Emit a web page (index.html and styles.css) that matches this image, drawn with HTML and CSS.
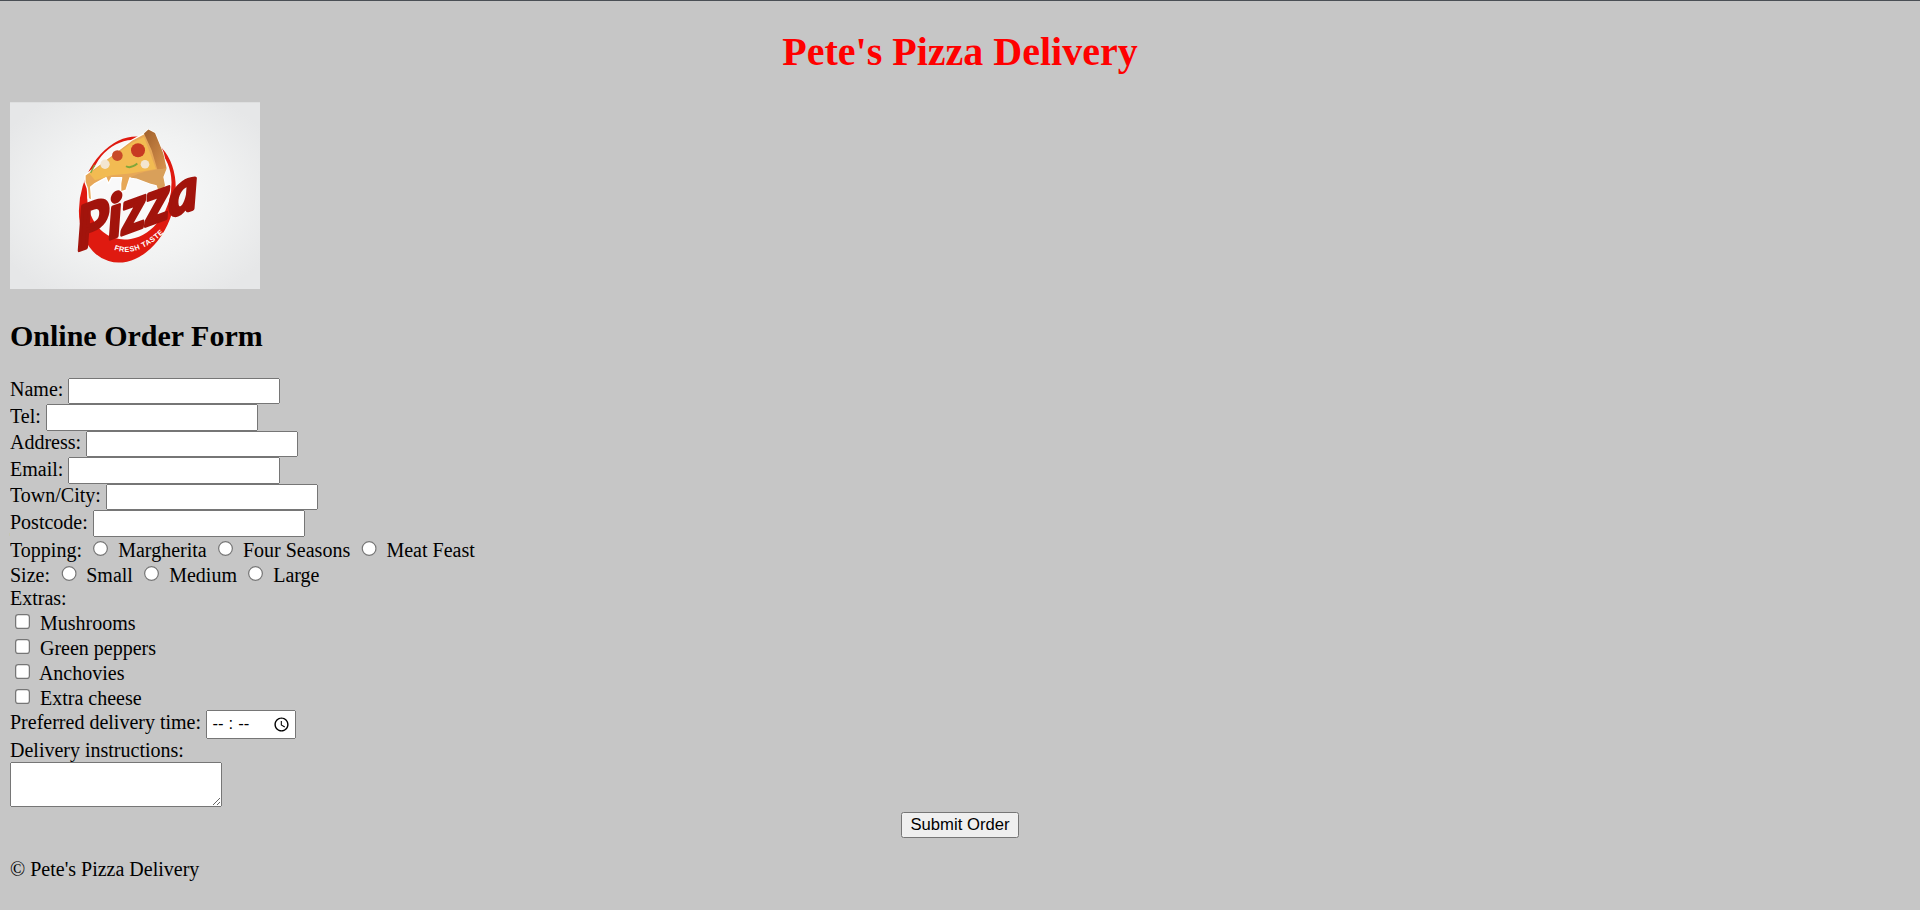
FILE: index.html
```html
<!DOCTYPE html>
<html lang="en-GB">
<head>
<meta charset="utf-8">
<title>Pete's Pizza Delivery</title>
<link rel="stylesheet" href="styles.css">
</head>
<body>
<header>
<h1 class="title">Pete's Pizza Delivery</h1>
<svg class="logo" viewBox="30 36 750 561" role="img" aria-label="Pizza logo">
<defs>
<radialGradient id="bg" cx="50%" cy="50%" r="62%"><stop offset="0" stop-color="#fbfbfb"/><stop offset="0.55" stop-color="#f1f2f2"/><stop offset="1" stop-color="#e6e7e8"/></radialGradient>
<linearGradient id="crust" x1="0" y1="0" x2="1" y2="1"><stop offset="0" stop-color="#a0602c"/><stop offset="1" stop-color="#d9944e"/></linearGradient>
<path id="arc" d="M342 478 Q412 506 500 420"/>
</defs>
<rect x="30" y="36" width="750" height="561" fill="url(#bg)"/>
<ellipse cx="382" cy="328" rx="140" ry="193" transform="rotate(17 382 328)" fill="#df1a10"/>
<ellipse cx="388" cy="298" rx="124" ry="152" transform="rotate(17 388 298)" fill="#f9f9f9"/>
<path d="M255 255 L395 150 L432 130 L445 118 L465 128 L478 160 L490 190 L500 235 L490 260 L495 285 L480 318 L470 285 L450 280 L410 265 L390 262 L378 300 L362 305 L362 280 L365 262 L335 262 L325 280 L318 262 L285 280 L272 290 L275 330 L265 325 L262 295 L255 275Z" fill="#e7a858" stroke="#fff" stroke-width="4" stroke-linejoin="round"/>
<path d="M432 130 L445 118 L465 128 L478 160 L490 190 L500 235 L472 238 L455 180Z" fill="url(#crust)"/>
<path d="M390 262 Q430 240 500 235 L490 260 L495 285 L480 318 L470 285 L450 280 L410 265Z" fill="#d9a05a"/>
<path d="M268 250 L395 158 L432 140 L468 236 L390 250 L335 255 L285 270Z" fill="#f2bb52"/>
<circle cx="414" cy="180" r="21" fill="#c73a22"/>
<circle cx="352" cy="196" r="16" fill="#c84a28"/>
<circle cx="315" cy="222" r="14" fill="#f3e6d0"/>
<circle cx="435" cy="222" r="13" fill="#f3e6d0"/>
<path d="M378 228 Q392 236 412 220" fill="none" stroke="#7fa63a" stroke-width="6"/>
<path d="M272 248 L284 224" fill="none" stroke="#7fa63a" stroke-width="4"/>
<text class="logo-word" transform="translate(232 482) rotate(-20) skewX(-18)" textLength="385" lengthAdjust="spacingAndGlyphs">Pizza</text>
<text class="logo-tag"><textPath href="#arc">FRESH TASTE</textPath></text>
</svg>
</header>
<main>
<h2 class="subtitle">Online Order Form</h2>
<form class="order">
<label>Name: <input type="text"></label><br>
<label>Tel: <input type="tel"></label><br>
<label>Address: <input type="text"></label><br>
<label>Email: <input type="email"></label><br>
<label>Town/City: <input type="text"></label><br>
<label>Postcode: <input type="text"></label><br>
Topping:
<label><input type="radio" name="topping"> Margherita</label>
<label><input type="radio" name="topping"> Four Seasons</label>
<label><input type="radio" name="topping"> Meat Feast</label><br>
Size:
<label><input type="radio" name="size"> Small</label>
<label><input type="radio" name="size"> Medium</label>
<label><input type="radio" name="size"> Large</label><br>
Extras:<br>
<label><input type="checkbox"> Mushrooms</label><br>
<label><input type="checkbox"> Green peppers</label><br>
<label><input type="checkbox"> Anchovies</label><br>
<label><input type="checkbox"> Extra cheese</label><br>
<label>Preferred delivery time: <input type="time" class="clock"></label><br>
<label for="notes">Delivery instructions:</label><br>
<textarea id="notes"></textarea><br>
<div class="actions"><button type="submit">Submit Order</button></div>
</form>
</main>
<footer><p>© Pete's Pizza Delivery</p></footer>
</body>
</html>
```
FILE: styles.css
```css
html {
  zoom: 1.25;
  background: #c6c6c6;
  border-top: 0.8px solid #4a4f55;
}
body {
  color: #000;
  font-family: "Liberation Serif", "Times New Roman", serif;
}
.title {
  margin-top: 13.44px;
  color: #f00;
  text-align: center;
}
.logo { width: 200px; height: 150px; }
.logo-word {
  font-family: Lato, "Liberation Sans", sans-serif;
  font-style: italic;
  font-weight: bold;
  font-size: 168px;
  fill: #a2140c;
  stroke: #a2140c;
  stroke-width: 10px;
  stroke-linejoin: round;
}
.logo-tag {
  font-family: "Liberation Sans", sans-serif;
  font-weight: bold;
  font-size: 22px;
  letter-spacing: 1.5px;
  fill: #fff;
}
input, textarea, button { font-family: "Liberation Sans", sans-serif; }
input[type="text"], input[type="tel"], input[type="email"] { width: 169.6px; box-sizing: border-box; }
textarea { width: 169.6px; height: 36px; box-sizing: border-box; }
.clock { width: 72px; box-sizing: border-box; }
.clock::-webkit-datetime-edit { padding-left: 1.5px; }
.clock::-webkit-datetime-edit-hour-field,
.clock::-webkit-datetime-edit-minute-field { letter-spacing: 3px; }
.clock::-webkit-datetime-edit-text { padding: 0 3px; }
.clock::-webkit-datetime-edit-ampm-field { display: none; }
.actions { text-align: center; }
```
